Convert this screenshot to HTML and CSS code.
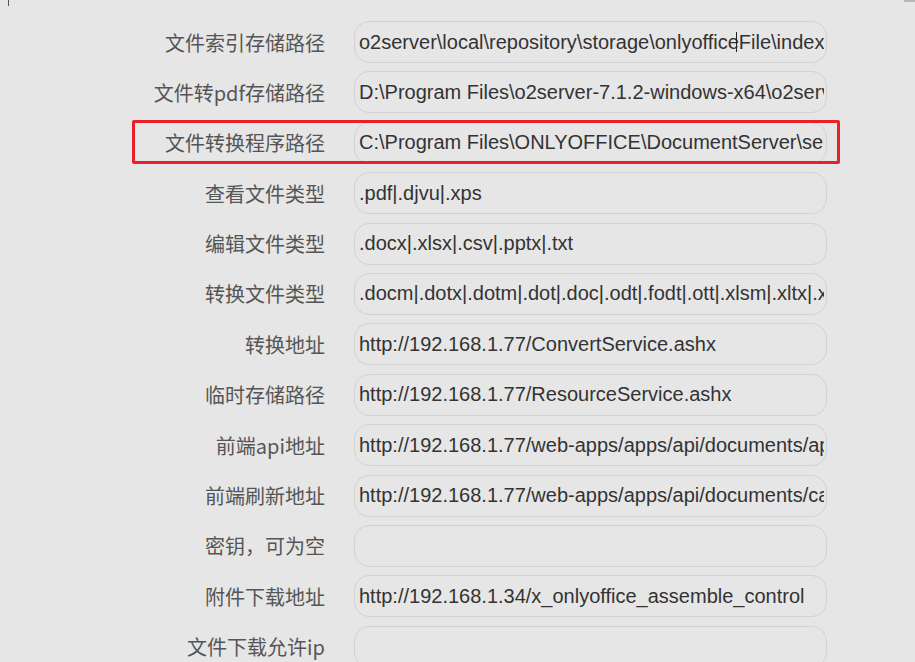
FILE: index.html
```html
<!DOCTYPE html>
<html lang="zh-CN">

<head>
    <meta charset="UTF-8">
    <title>OnlyOffice 配置</title>
    <link rel="stylesheet" href="styles.css">
</head>

<body>
    <div class="edge-mark"></div>
    <div class="corner-mark"></div>
    <form class="config-form">
        <div class="row">
            <label>文件索引存储路径</label>
            <div class="field-holder">
                <input type="text" value="o2server\local\repository\storage\onlyofficeFile\index">
                <span class="caret"></span>
            </div>
        </div>
        <div class="row">
            <label>文件转pdf存储路径</label>
            <input type="text" value="D:\Program Files\o2server-7.1.2-windows-x64\o2server\local\repository\storage\onlyofficeFile\pdf">
        </div>
        <div class="row marked">
            <label>文件转换程序路径</label>
            <input type="text" value="C:\Program Files\ONLYOFFICE\DocumentServer\server\FileConverter\bin\x2t.exe">
        </div>
        <div class="row">
            <label>查看文件类型</label>
            <input type="text" value=".pdf|.djvu|.xps">
        </div>
        <div class="row">
            <label>编辑文件类型</label>
            <input type="text" value=".docx|.xlsx|.csv|.pptx|.txt">
        </div>
        <div class="row">
            <label>转换文件类型</label>
            <input type="text" value=".docm|.dotx|.dotm|.dot|.doc|.odt|.fodt|.ott|.xlsm|.xltx|.xltm|.xlt|.xls|.ods|.fods|.ots|.pptm|.ppt|.ppsx|.pps">
        </div>
        <div class="row">
            <label>转换地址</label>
            <input type="text" value="http://192.168.1.77/ConvertService.ashx">
        </div>
        <div class="row">
            <label>临时存储路径</label>
            <input type="text" value="http://192.168.1.77/ResourceService.ashx">
        </div>
        <div class="row">
            <label>前端api地址</label>
            <input type="text" value="http://192.168.1.77/web-apps/apps/api/documents/api.js">
        </div>
        <div class="row">
            <label>前端刷新地址</label>
            <input type="text" value="http://192.168.1.77/web-apps/apps/api/documents/cache/files">
        </div>
        <div class="row">
            <label>密钥，可为空</label>
            <input type="text" value="">
        </div>
        <div class="row">
            <label>附件下载地址</label>
            <input type="text" value="http://192.168.1.34/x_onlyoffice_assemble_control">
        </div>
        <div class="row">
            <label>文件下载允许ip</label>
            <input type="text" value="">
        </div>
    </form>
</body>

</html>
```

FILE: styles.css
```css
body {
    margin: 0;
    background: #e6e6e6;
    overflow: hidden;
}

.edge-mark {
    width: 1px;
    height: 6px;
    margin-left: 8px;
    background: #555;
}

.corner-mark {
    position: absolute;
    top: 0;
    right: 0;
    width: 11px;
    height: 2px;
    background: #b8b8b8;
}

.config-form {
    padding-top: 15px;
}

.row {
    position: relative;
    display: flex;
    align-items: center;
    gap: 29px;
    width: 708px;
    height: 42px;
    margin-left: 132px;
    margin-bottom: 8.4px;
}

.row label {
    width: 193px;
    text-align: right;
    font-family: "Noto Sans CJK SC", sans-serif;
    font-size: 20px;
    color: #555;
}

.row input {
    box-sizing: border-box;
    width: 473px;
    height: 42px;
    padding: 0 2px 0 4px;
    border: 1px solid #d2d2d2;
    border-radius: 15px;
    background: #e6e6e6;
    font-family: "Liberation Sans", Arial, sans-serif;
    font-size: 20px;
    color: #333;
    outline: none;
}

.field-holder {
    position: relative;
    height: 42px;
}

.caret {
    position: absolute;
    left: 382px;
    top: 11px;
    width: 1px;
    height: 20px;
    background: #222;
}

.marked::after {
    content: "";
    position: absolute;
    top: -2px;
    left: 0;
    right: 0;
    bottom: 0;
    border: 3px solid #e8202a;
    border-radius: 2px;
}
```
